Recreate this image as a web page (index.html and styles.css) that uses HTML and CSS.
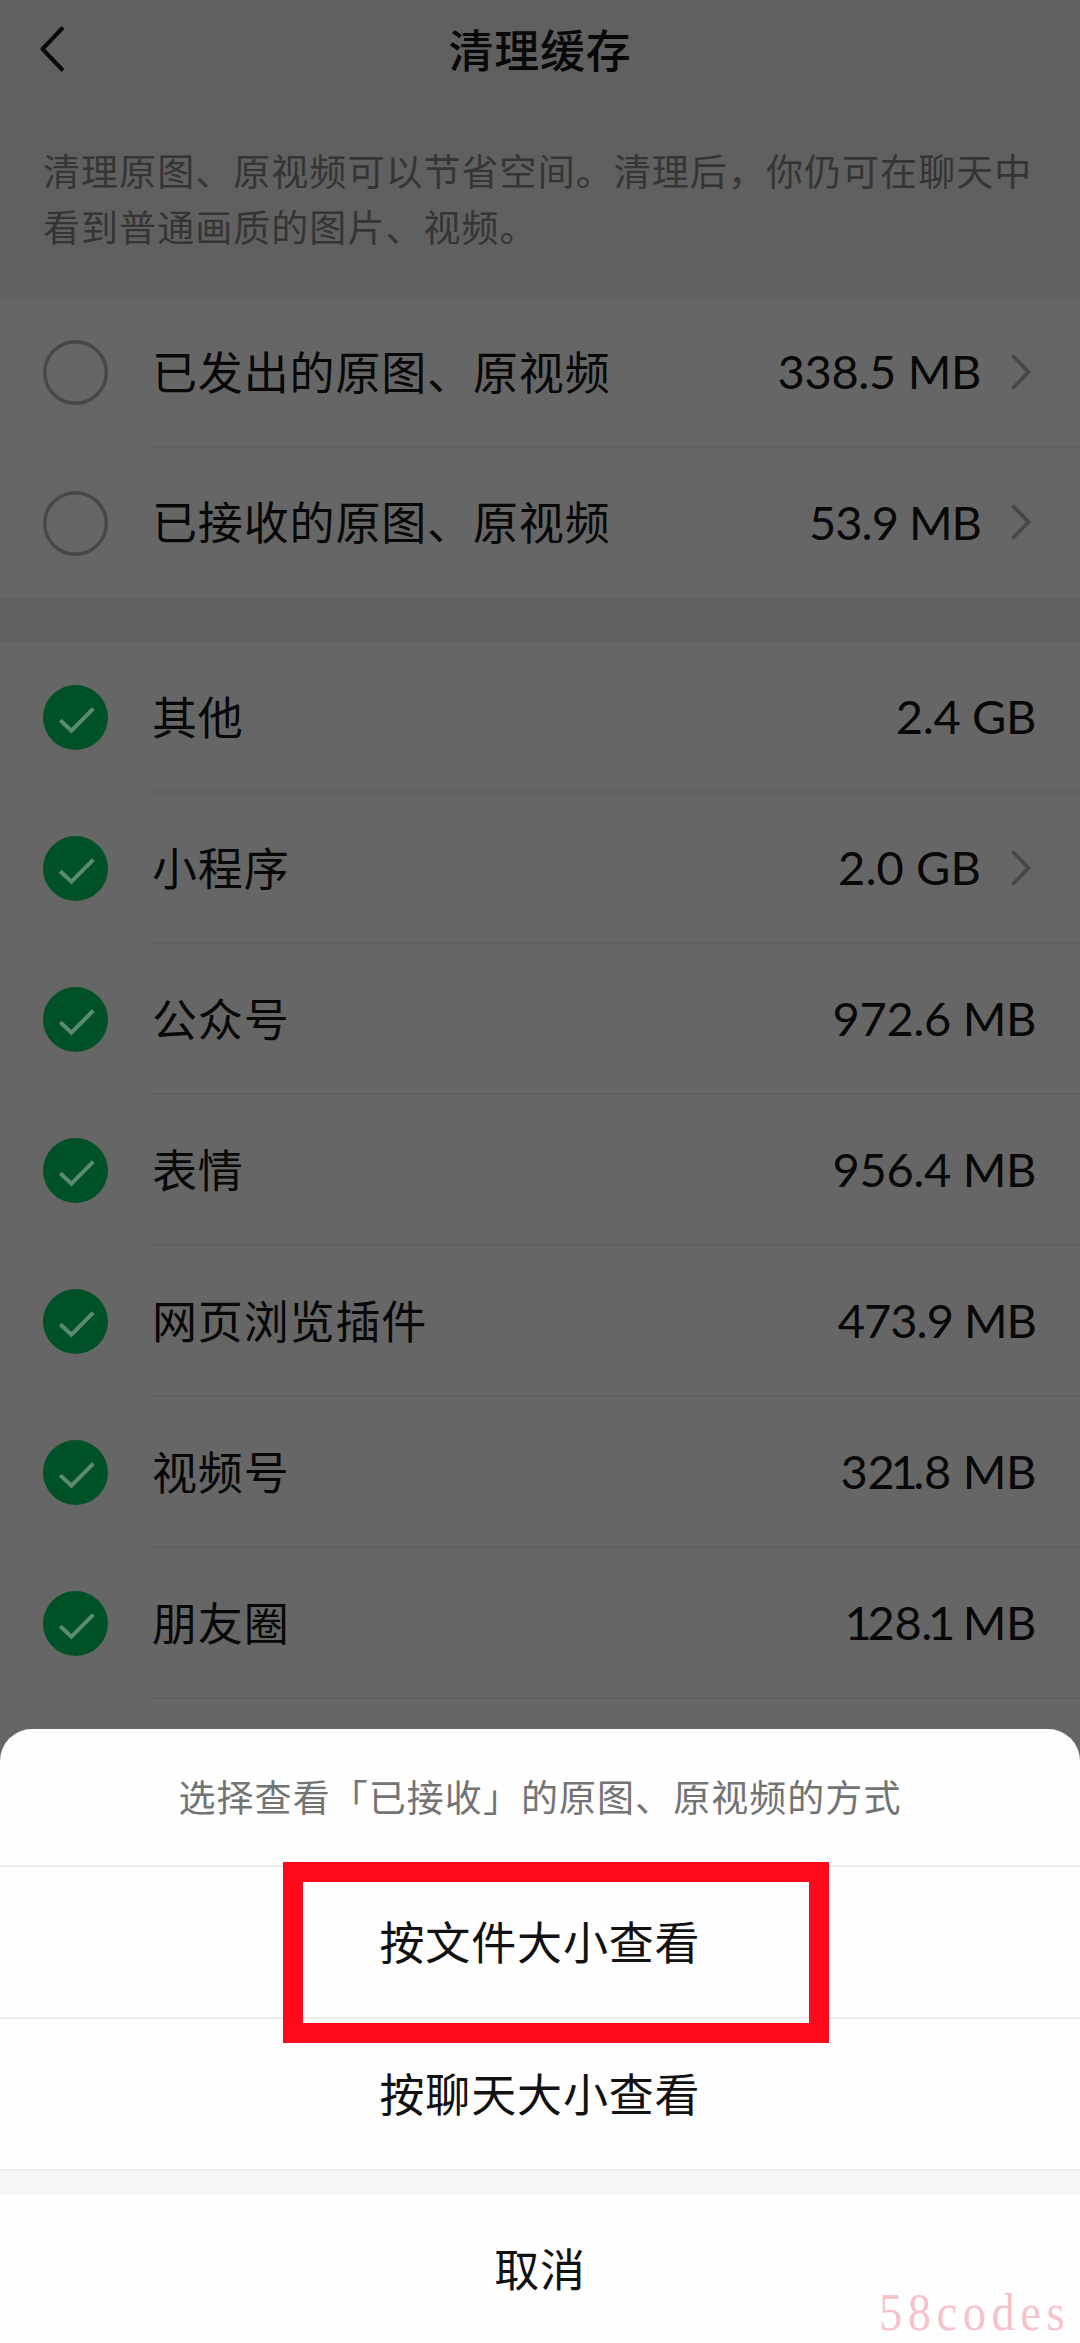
FILE: index.html
```html
<!DOCTYPE html>
<html lang="zh-CN">
<head>
<meta charset="utf-8">
<title>清理缓存</title>
<link rel="stylesheet" href="styles.css">
</head>
<body>
<svg class="defs" aria-hidden="true">
  <symbol id="tick" viewBox="0 0 64 64"><circle cx="32" cy="32" r="32" fill="#005028"/><path d="M17 34.7 28 45 49.5 23.3" fill="none" stroke="#5a8b70" stroke-width="4"/></symbol>
  <symbol id="ring" viewBox="0 0 64 64"><circle cx="32" cy="32" r="30.3" fill="none" stroke="#484848" stroke-width="3.4"/></symbol>
  <symbol id="next" viewBox="0 0 20 36"><path d="M1.5 1.5 17.5 18 1.5 34.5" fill="none" stroke="#474747" stroke-width="3.8"/></symbol>
</svg>
<main class="screen">
  <header class="navbar">
    <svg class="back" viewBox="0 0 28 48"><path d="M24 2.5 3.5 24 24 45.500" fill="none" stroke="#0a0a0a" stroke-width="4" stroke-linejoin="round"/></svg>
    <h1 class="title">清理缓存</h1>
  </header>
  <p class="intro">清理原图、原视频可以节省空间。清理后，你仍可在聊天中<br>看到普通画质的图片、视频。</p>
  <section class="group">
    <div class="row"><svg class="check"><use href="#ring"/></svg><div class="cell"><span class="label">已发出的原图、原视频</span><span class="size">338.5 MB</span><svg class="next"><use href="#next"/></svg></div></div>
    <div class="row last"><svg class="check"><use href="#ring"/></svg><div class="cell"><span class="label">已接收的原图、原视频</span><span class="size tight">53.9 MB</span><svg class="next"><use href="#next"/></svg></div></div>
  </section>
  <section class="group">
    <div class="row"><svg class="check"><use href="#tick"/></svg><div class="cell"><span class="label">其他</span><span class="size">2.4 GB</span></div></div>
    <div class="row"><svg class="check"><use href="#tick"/></svg><div class="cell"><span class="label">小程序</span><span class="size loose">2.0 GB</span><svg class="next"><use href="#next"/></svg></div></div>
    <div class="row"><svg class="check"><use href="#tick"/></svg><div class="cell"><span class="label">公众号</span><span class="size">972.6 MB</span></div></div>
    <div class="row"><svg class="check"><use href="#tick"/></svg><div class="cell"><span class="label">表情</span><span class="size">956.4 MB</span></div></div>
    <div class="row"><svg class="check"><use href="#tick"/></svg><div class="cell"><span class="label">网页浏览插件</span><span class="size tight">473.9 MB</span></div></div>
    <div class="row"><svg class="check"><use href="#tick"/></svg><div class="cell"><span class="label">视频号</span><span class="size">32<span class="one">1</span>.8 MB</span></div></div>
    <div class="row"><svg class="check"><use href="#tick"/></svg><div class="cell"><span class="label">朋友圈</span><span class="size"><span class="one">1</span>28.<span class="one">1</span> MB</span></div></div>
  </section>
  <div class="sheet">
    <div class="sheet-title">选择查看「已接收」的原图、原视频的方式</div>
    <div class="option">按文件大小查看<div class="highlight"></div></div>
    <div class="option">按聊天大小查看</div>
    <div class="cancel">取消</div>
    <div class="watermark">58codes</div>
  </div>
</main>
</body>
</html>
```

FILE: styles.css
```css
* { box-sizing: border-box; }

body {
  margin: 0;
  background: #666;
  font-family: "Noto Sans CJK SC", sans-serif;
}

.defs { position: absolute; width: 0; height: 0; }

.screen {
  position: relative;
  width: 1080px;
  height: 2343px;
  overflow: hidden;
  background: #666;
  color: #080808;
}

.navbar {
  display: grid;
  grid-template-columns: 100px 1fr 100px;
  align-items: center;
  height: 97px;
  background: #606060;
}

.back { width: 28px; height: 48px; margin-left: 39px; }

.title {
  margin: 0;
  text-align: center;
  font-size: 45px;
  line-height: 60px;
  font-weight: 500;
  letter-spacing: 0.8px;
}

.intro {
  margin: 0;
  height: 200px;
  padding: 45px 0 0 43px;
  background: #606060;
  color: #353535;
  font-size: 37px;
  line-height: 56px;
  letter-spacing: 1.05px;
  white-space: nowrap;
}

.group + .group { border-top: 44px solid #606060; }

.row { display: flex; align-items: center; height: 151px; padding-left: 43px; }

.check { width: 65px; height: 65px; margin-right: 45px; }

.cell {
  display: flex;
  flex: 1;
  align-items: center;
  height: 151px;
  padding-right: 44px;
  border-bottom: 2px solid #606060;
  font-size: 45px;
  letter-spacing: 0.85px;
}

.label { margin-left: -1px; padding-bottom: 3px; }

.last { height: 150px; }
.last .cell { height: 150px; border-bottom-color: transparent; }

.size {
  margin-left: auto;
  padding-bottom: 1px;
  font-family: Lato, "Noto Sans CJK SC", sans-serif;
  font-size: 47px;
  letter-spacing: -0.35px;
}

.tight { letter-spacing: -1px; }
.loose { letter-spacing: 0.1px; }
.one { margin: 0 -4px; }

.next { width: 20px; height: 36px; margin-left: 30px; margin-right: 5px; }

.sheet {
  position: absolute;
  left: 0;
  right: 0;
  bottom: 0;
  height: 614px;
  border-radius: 32px 32px 0 0;
  background: #fefefe;
  color: #111;
  text-align: center;
}

.sheet-title {
  height: 138px;
  border-bottom: 2px solid #ededed;
  color: #737373;
  font-size: 37px;
  line-height: 134px;
  letter-spacing: 1.05px;
}

.option {
  position: relative;
  height: 152px;
  border-bottom: 2px solid #ededed;
  font-size: 45px;
  line-height: 148px;
  letter-spacing: 0.85px;
}

.highlight {
  position: absolute;
  z-index: 1;
  left: 283px;
  top: -5px;
  width: 546px;
  height: 181px;
  border: 20px solid #ff091d;
}

.cancel {
  height: 174px;
  border-top: 24px solid #f6f6f6;
  font-size: 45px;
  line-height: 146px;
  letter-spacing: 0.85px;
}

.watermark {
  position: absolute;
  right: 10px;
  bottom: 1px;
  color: #f6c3ca;
  font-family: "Liberation Serif", serif;
  font-size: 53px;
  line-height: 60px;
  letter-spacing: 6.2px;
  transform: scaleX(0.88);
  transform-origin: right;
}
```
